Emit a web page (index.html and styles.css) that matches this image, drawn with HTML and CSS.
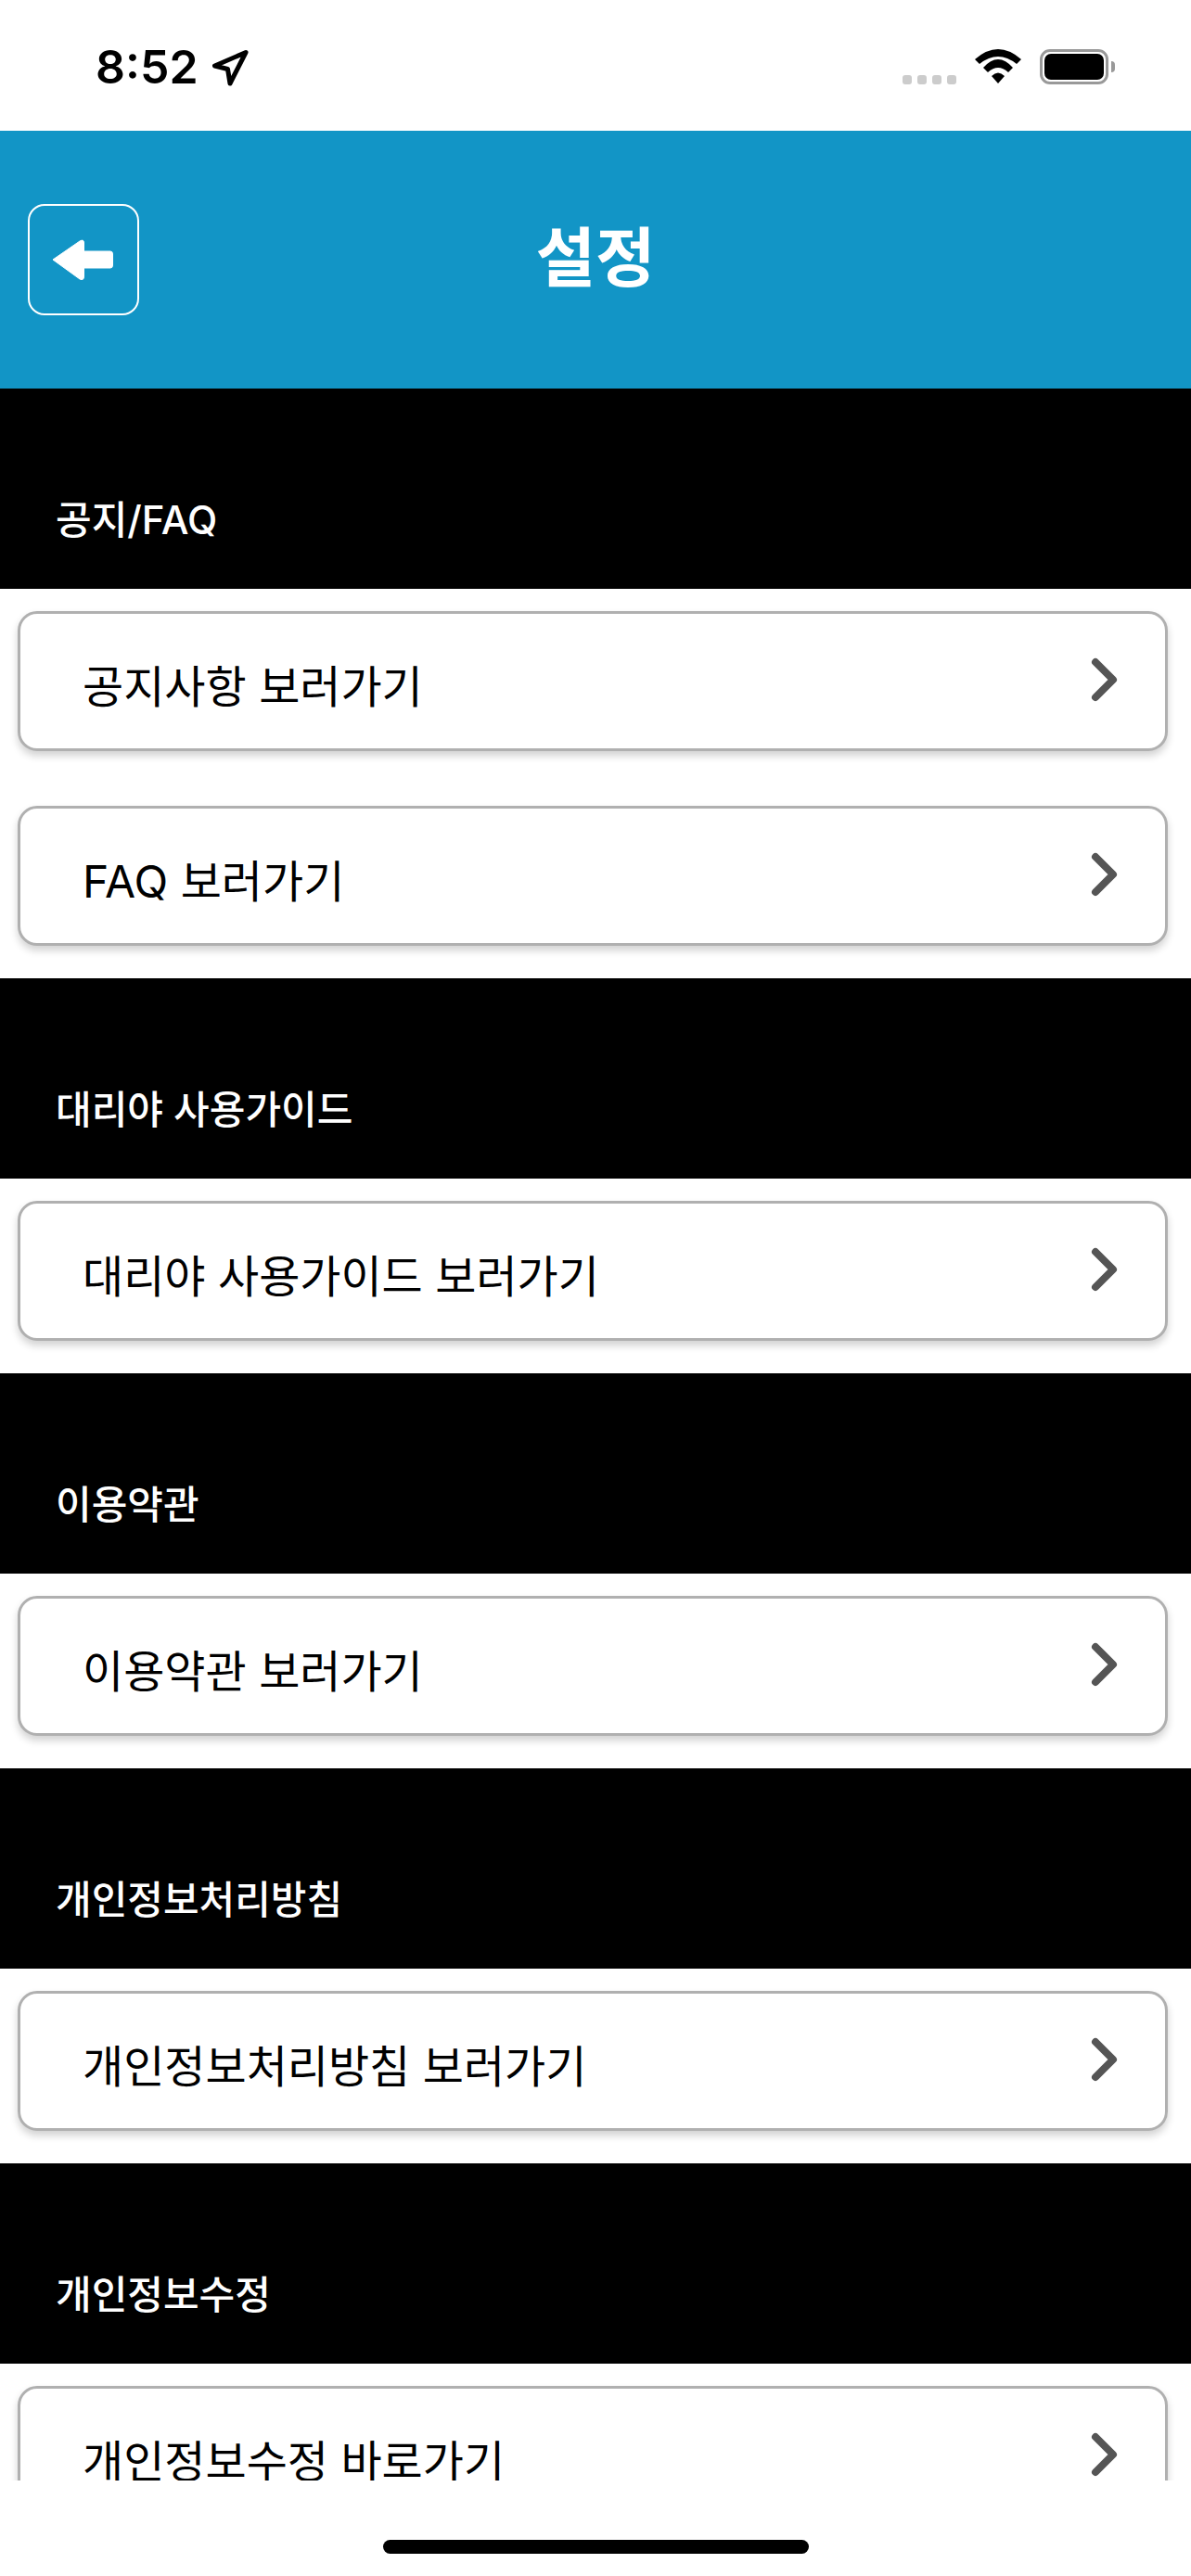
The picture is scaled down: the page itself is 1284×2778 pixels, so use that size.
FILE: index.html
```html
<!DOCTYPE html>
<html lang="ko">
<head>
<meta charset="utf-8">
<title>설정</title>
<link rel="stylesheet" href="styles.css">
</head>
<body>
<div class="screen">
  <div class="statusbar">
    <div class="status-left">
      <span class="time">8:52</span>
      <svg class="loc" viewBox="0 0 40 40" width="40" height="40"><path d="M37 3.500 L3.500 18 L17.500 21.500 L20 37 Z" fill="none" stroke="#000" stroke-width="5" stroke-linejoin="round"/></svg>
    </div>
    <div class="status-right">
      <div class="dots"><i></i><i></i><i></i><i></i></div>
      <svg class="wifi" viewBox="0 0 50 38" width="50" height="38"><path d="M0 11 Q25 -11 50 11 L45 16 Q25 0 5 16 Z M9 20 Q25 2 41 20 L36 25 Q25 15 14 25 Z M18 29 Q25 22 32 29 L25 37 Z" fill="#000"/></svg>
      <div class="battery"><div class="battery-body"><div class="battery-fill"></div></div><div class="battery-nub"></div></div>
    </div>
  </div>

  <header class="topbar">
    <button class="back" type="button" aria-label="뒤로">
      <svg viewBox="0 0 66 46" width="66" height="46"><path d="M1 23 L30 3 Q34.500 .5 34.500 5 L34.500 14 L63 14 Q65.500 14 65.500 17 L65.500 29 Q65.500 32 63 32 L34.500 32 L34.500 41 Q34.500 46 30 44 Z" fill="#fff" stroke="#fff" stroke-width="1" stroke-linejoin="round"/></svg>
    </button>
    <h1 class="title">설정</h1>
  </header>

  <main class="content">
    <section>
      <h2 class="section-head"><span>공지/FAQ</span></h2>
      <div class="cards">
        <a class="card"><span>공지사항 보러가기</span><svg class="chev" viewBox="0 0 30 48" width="30" height="48"><path d="M5 5 L24 24 L5 43" fill="none" stroke="#555" stroke-width="8" stroke-linecap="round" stroke-linejoin="round"/></svg></a>
        <a class="card"><span>FAQ 보러가기</span><svg class="chev" viewBox="0 0 30 48" width="30" height="48"><path d="M5 5 L24 24 L5 43" fill="none" stroke="#555" stroke-width="8" stroke-linecap="round" stroke-linejoin="round"/></svg></a>
      </div>
    </section>
    <section>
      <h2 class="section-head"><span>대리야 사용가이드</span></h2>
      <div class="cards">
        <a class="card"><span>대리야 사용가이드 보러가기</span><svg class="chev" viewBox="0 0 30 48" width="30" height="48"><path d="M5 5 L24 24 L5 43" fill="none" stroke="#555" stroke-width="8" stroke-linecap="round" stroke-linejoin="round"/></svg></a>
      </div>
    </section>
    <section>
      <h2 class="section-head"><span>이용약관</span></h2>
      <div class="cards">
        <a class="card"><span>이용약관 보러가기</span><svg class="chev" viewBox="0 0 30 48" width="30" height="48"><path d="M5 5 L24 24 L5 43" fill="none" stroke="#555" stroke-width="8" stroke-linecap="round" stroke-linejoin="round"/></svg></a>
      </div>
    </section>
    <section>
      <h2 class="section-head"><span>개인정보처리방침</span></h2>
      <div class="cards">
        <a class="card"><span>개인정보처리방침 보러가기</span><svg class="chev" viewBox="0 0 30 48" width="30" height="48"><path d="M5 5 L24 24 L5 43" fill="none" stroke="#555" stroke-width="8" stroke-linecap="round" stroke-linejoin="round"/></svg></a>
      </div>
    </section>
    <section>
      <h2 class="section-head"><span>개인정보수정</span></h2>
      <div class="cards">
        <a class="card"><span>개인정보수정 바로가기</span><svg class="chev" viewBox="0 0 30 48" width="30" height="48"><path d="M5 5 L24 24 L5 43" fill="none" stroke="#555" stroke-width="8" stroke-linecap="round" stroke-linejoin="round"/></svg></a>
      </div>
    </section>
  </main>

  <div class="homebar"><div class="home-indicator"></div></div>
</div>
</body>
</html>
```
FILE: styles.css
```css
* { box-sizing: border-box; }
html, body { margin: 0; padding: 0; background: #fff; }
body { font-family: Inter, "Noto Sans CJK KR", sans-serif; color: #000; }
.screen { width: 1284px; height: 2778px; display: flex; flex-direction: column; overflow: hidden; background: #fff; }

.statusbar { height: 141px; flex: none; display: flex; justify-content: space-between; align-items: flex-start; padding: 53px 82px 0 103px; }
.status-left { display: flex; align-items: center; gap: 14px; height: 39px; }
.time { font-family: Inter, sans-serif; font-weight: 600; font-size: 50px; line-height: 39px; }
.loc { display: block; }
.status-right { display: flex; align-items: flex-start; }
.dots { display: flex; gap: 6px; margin-top: 28px; margin-right: 20px; }
.dots i { display: block; width: 10px; height: 10px; border-radius: 3px; background: #ccc; }
.wifi { display: block; margin-right: 20px; }
.battery { display: flex; align-items: center; height: 38px; }
.battery-body { width: 74px; height: 38px; border: 3px solid #999; border-radius: 11px; padding: 2px; }
.battery-fill { width: 100%; height: 100%; background: #000; border-radius: 7px; }
.battery-nub { width: 4px; height: 12px; margin-left: 3px; background: #999; border-radius: 0 6px 6px 0; }

.topbar { height: 278px; flex: none; background: #1295c6; display: flex; align-items: center; position: relative; padding-left: 30px; }
.back { width: 120px; height: 120px; padding: 0; border: 2px solid #fff; border-radius: 18px; background: transparent; display: flex; align-items: center; justify-content: center; }
.back svg { display: block; margin-right: 2px; }
.title { position: absolute; left: 0; right: 0; top: 0; bottom: 2px; margin: 0; display: flex; align-items: center; justify-content: center; color: #fff; font-size: 70px; font-weight: 700; line-height: 1; }

.content { height: 2256px; flex: none; overflow: hidden; }
.section-head { margin: 0; height: 216px; background: #000; color: #fff; font-size: 42px; font-weight: 500; line-height: 56px; padding: 114px 0 0 60px; }
.cards { display: flex; flex-direction: column; gap: 59px; padding: 24px 25px 35px 19px; }
.card { height: 151px; flex: none; display: flex; align-items: center; justify-content: space-between; padding: 0 50px 0 67px; border: 3px solid #b0b0b0; border-radius: 21px; background: #fff; box-shadow: 0 5px 9px rgba(0,0,0,.18); font-size: 48px; font-weight: 400; color: #000; }
.card span { padding-top: 5px; }
.chev { display: block; flex: none; margin-top: -4px; }

.homebar { flex: 1; display: flex; justify-content: center; padding-top: 64px; }
.home-indicator { width: 459px; height: 15px; border-radius: 8px; background: #000; }
```
